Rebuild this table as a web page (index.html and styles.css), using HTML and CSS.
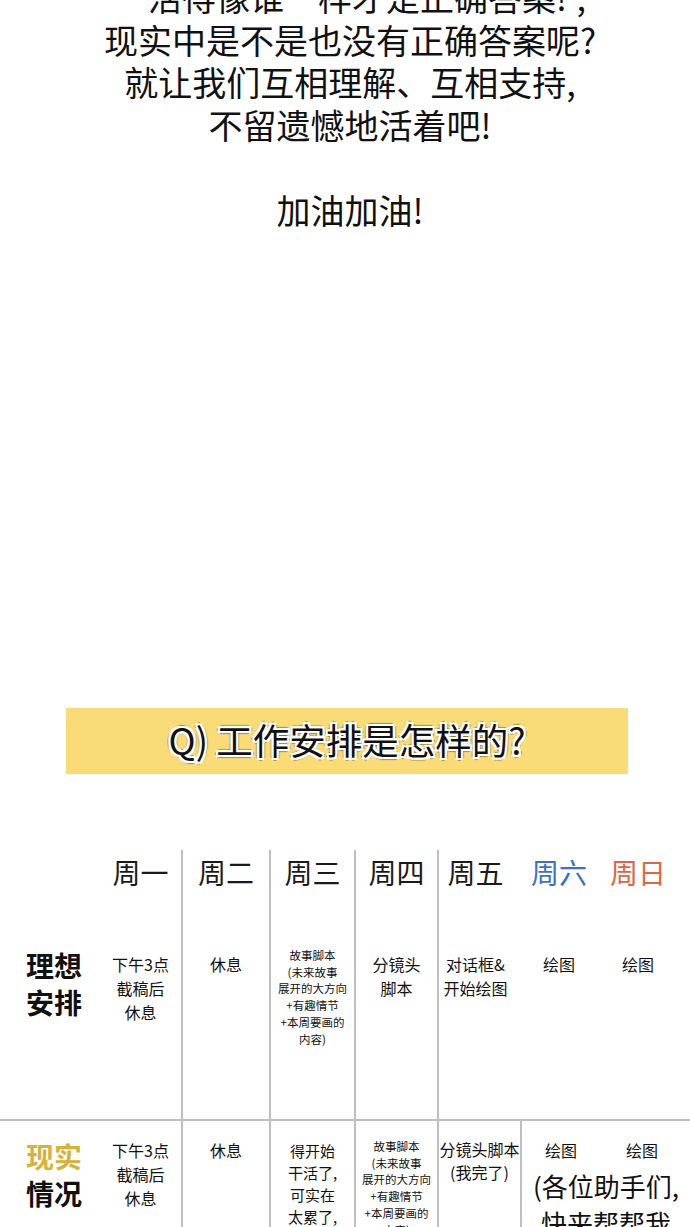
FILE: index.html
```html
<!DOCTYPE html>
<html lang="zh-CN">
<head>
    <meta charset="UTF-8">
    <meta name="viewport" content="width=device-width, initial-scale=1.0">
    <title>工作安排是怎样的?</title>
    <link rel="stylesheet" href="styles.css">
</head>
<body>
    <div class="story">
        <p class="shift">活得像谁一样才是正确答案!',</p>
        <p>现实中是不是也没有正确答案呢?</p>
        <p>就让我们互相理解、互相支持,</p>
        <p>不留遗憾地活着吧!</p>
        <p class="cheer">加油加油!</p>
    </div>

    <div class="banner">
        <span>Q) 工作安排是怎样的?</span>
    </div>

    <div class="schedule">
        <!-- 星期 -->
        <div class="day"></div>
        <div class="day">周一</div>
        <div class="day line">周二</div>
        <div class="day line">周三</div>
        <div class="day line">周四</div>
        <div class="day line fri">周五</div>
        <div class="day sat">周六</div>
        <div class="day sun">周日</div>

        <!-- 理想安排 -->
        <div class="label">理想<br>安排</div>
        <div class="task">下午3点<br>截稿后<br>休息</div>
        <div class="task line">休息</div>
        <div class="task line small">故事脚本<br>(未来故事<br>展开的大方向<br>+有趣情节<br>+本周要画的<br>内容)</div>
        <div class="task line">分镜头<br>脚本</div>
        <div class="task line fri">对话框&amp;<br>开始绘图</div>
        <div class="task">绘图</div>
        <div class="task sun-col">绘图</div>

        <!-- 现实情况 -->
        <div class="label real"><span class="gold">现实</span><br>情况</div>
        <div class="task real">下午3点<br>截稿后<br>休息</div>
        <div class="task real line">休息</div>
        <div class="task real line tight">得开始<br>干活了,<br>可实在<br>太累了,<br>再不下班</div>
        <div class="task real line small">故事脚本<br>(未来故事<br>展开的大方向<br>+有趣情节<br>+本周要画的<br>内容)</div>
        <div class="task real line snug">分镜头脚本<br>(我完了)</div>
        <div class="task real line weekend">
            <div class="pair">
                <span>绘图</span>
                <span>绘图</span>
            </div>
            <div class="help">(各位助手们,<br>快来帮帮我</div>
        </div>
    </div>
</body>
</html>
```

FILE: styles.css
```css
body {
    margin: 0;
    background: #fff;
    color: #111;
    font-family: "Noto Sans CJK SC", "Noto Sans", sans-serif;
    overflow: hidden;
}

.story {
    margin-top: -24px;
    text-align: center;
    font-size: 34px;
    line-height: 42.5px;
    padding-left: 10px;
}

.story p {
    margin: 0;
}

.story .shift {
    padding-left: 34px;
}

.story .cheer {
    margin-top: 42.5px;
}

.banner {
    margin: 477px 62px 0 66px;
    height: 66px;
    background-color: #f9dc78;
    display: flex;
    justify-content: center;
    align-items: center;
}

.banner span {
    margin-top: -3px;
    font-size: 36.5px;
    color: #111;
    text-shadow:
        2px 0 0 #fff, -2px 0 0 #fff, 0 2px 0 #fff, 0 -2px 0 #fff,
        2px 2px 0 #fff, -2px 2px 0 #fff, 2px -2px 0 #fff, -2px -2px 0 #fff,
        3px 0 1px rgba(0, 0, 0, 0.35), -3px 0 1px rgba(0, 0, 0, 0.35),
        0 3px 1px rgba(0, 0, 0, 0.35), 0 -3px 1px rgba(0, 0, 0, 0.35);
}

.schedule {
    margin-top: 76px;
    display: grid;
    grid-template-columns: 100px 81px 88px 85px 83px 83px 78px 92px;
    grid-template-rows: 55px 214px 140px;
}

.schedule > div {
    box-sizing: border-box;
}

.line {
    border-left: 2px solid #bfbfbf;
}

.real {
    border-top: 2px solid #bfbfbf;
}

.day {
    padding-top: 7px;
    font-size: 28px;
    line-height: 30px;
    text-align: center;
    color: #1a1a1a;
}

.day.fri,
.task.fri {
    padding-right: 8px;
}

.day.sat {
    color: #3b70c6;
}

.day.sun {
    color: #e0663f;
    padding-right: 12px;
}

.label {
    padding: 42px 0 0 8px;
    font-size: 28px;
    font-weight: bold;
    line-height: 37px;
    text-align: center;
}

.label.real {
    padding-top: 17px;
}

.gold {
    color: #d6b23a;
}

.task {
    padding-top: 47px;
    font-size: 16px;
    line-height: 24px;
    text-align: center;
}

.task.sun-col {
    padding-right: 12px;
}

.task.small {
    padding-top: 42px;
    font-size: 11.5px;
    line-height: 16.7px;
}

.task.real {
    padding-top: 17px;
}

.task.real.tight {
    padding-top: 19px;
    font-size: 15px;
    line-height: 22px;
}

.task.real.small {
    padding-top: 17px;
}

.task.real.snug {
    line-height: 23px;
}

.weekend {
    grid-column: span 2;
}

.pair {
    display: grid;
    grid-template-columns: 78px 1fr;
    padding-right: 6px;
}

.help {
    margin-top: 5px;
    font-size: 26px;
    line-height: 37px;
}
```
